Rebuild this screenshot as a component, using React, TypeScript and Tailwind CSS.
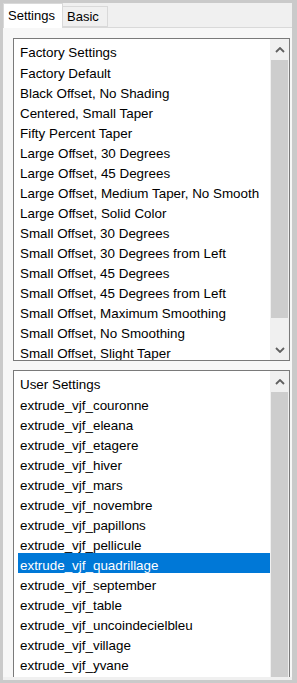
const factoryItems = [
  "Factory Default",
  "Black Offset, No Shading",
  "Centered, Small Taper",
  "Fifty Percent Taper",
  "Large Offset, 30 Degrees",
  "Large Offset, 45 Degrees",
  "Large Offset, Medium Taper, No Smooth",
  "Large Offset, Solid Color",
  "Small Offset, 30 Degrees",
  "Small Offset, 30 Degrees from Left",
  "Small Offset, 45 Degrees",
  "Small Offset, 45 Degrees from Left",
  "Small Offset, Maximum Smoothing",
  "Small Offset, No Smoothing",
  "Small Offset, Slight Taper",
];

const userItems = [
  "extrude_vjf_couronne",
  "extrude_vjf_eleana",
  "extrude_vjf_etagere",
  "extrude_vjf_hiver",
  "extrude_vjf_mars",
  "extrude_vjf_novembre",
  "extrude_vjf_papillons",
  "extrude_vjf_pellicule",
  "extrude_vjf_quadrillage",
  "extrude_vjf_september",
  "extrude_vjf_table",
  "extrude_vjf_uncoindecielbleu",
  "extrude_vjf_village",
  "extrude_vjf_yvane",
];

function Chevron({ down = false }: { down?: boolean }) {
  return (
    <svg width="10" height="6" viewBox="0 0 10 6" aria-hidden="true">
      <polyline
        points={down ? "1,1 5,5 9,1" : "1,5 5,1 9,5"}
        fill="none"
        stroke="#606060"
        strokeWidth="1.8"
      />
    </svg>
  );
}

function ListBox({
  title,
  items,
  selected,
  className,
  thumbClass,
  showDown,
}: {
  title: string;
  items: string[];
  selected?: string;
  className: string;
  thumbClass: string;
  showDown: boolean;
}) {
  return (
    <div className={`flex overflow-hidden border border-[#7a7a7a] bg-white text-[13.4px] ${className}`}>
      <div className="min-w-0 flex-1 overflow-hidden pl-[4px] pt-[1px]">
        <div className="flex h-[21px] items-center pl-[2px] pt-[4px]">{title}</div>
        {items.map((item) => (
          <div
            key={item}
            className={`flex h-[20px] items-center whitespace-nowrap pl-[2px] pt-[5px] ${
              item === selected ? "bg-[#0078d7] text-white" : ""
            }`}
          >
            {item}
          </div>
        ))}
      </div>
      <div className="flex w-[19px] shrink-0 flex-col bg-[#f0f0f0]">
        <div className="flex h-[21px] shrink-0 items-center justify-center">
          <Chevron />
        </div>
        <div className={`mx-[1px] shrink-0 bg-[#cdcdcd] ${thumbClass}`} />
        <div className="flex-1" />
        {showDown && (
          <div className="flex h-[20px] shrink-0 items-center justify-center">
            <Chevron down />
          </div>
        )}
      </div>
    </div>
  );
}

export default function App() {
  return (
    <div className="h-[683px] w-[297px] bg-[#cacaca] pb-[3px] pl-[3px] pr-[5px] pt-[3px] font-['Liberation_Sans',Arial,sans-serif] text-[13px] leading-none text-black">
      <div className="flex h-full flex-col bg-[#f0f0f0]">
        <div className="flex h-[25px] shrink-0 items-end border-b border-[#d9d9d9]">
          <div className="relative -mb-px flex h-[25px] w-[60px] items-start border border-b-0 border-[#d9d9d9] bg-white pl-[4px] pt-[5px]">
            Settings
          </div>
          <div className="flex h-[21px] w-[45px] items-start border border-l-0 border-[#d9d9d9] bg-[#f0f0f0] pl-[4px] pt-[3px]">
            Basic
          </div>
        </div>
        <div className="mb-[3px] flex min-h-0 flex-1 flex-col gap-[9px] overflow-hidden bg-[#f7f7f7] pl-[10px] pr-[2px] pt-[10px]">
          <ListBox
            title="Factory Settings"
            items={factoryItems}
            className="h-[323px] shrink-0"
            thumbClass="h-[258px]"
            showDown
          />
          <ListBox
            title="User Settings"
            items={userItems}
            selected="extrude_vjf_quadrillage"
            className="h-[320px] shrink-0"
            thumbClass="h-[300px]"
            showDown={false}
          />
        </div>
      </div>
    </div>
  );
}
